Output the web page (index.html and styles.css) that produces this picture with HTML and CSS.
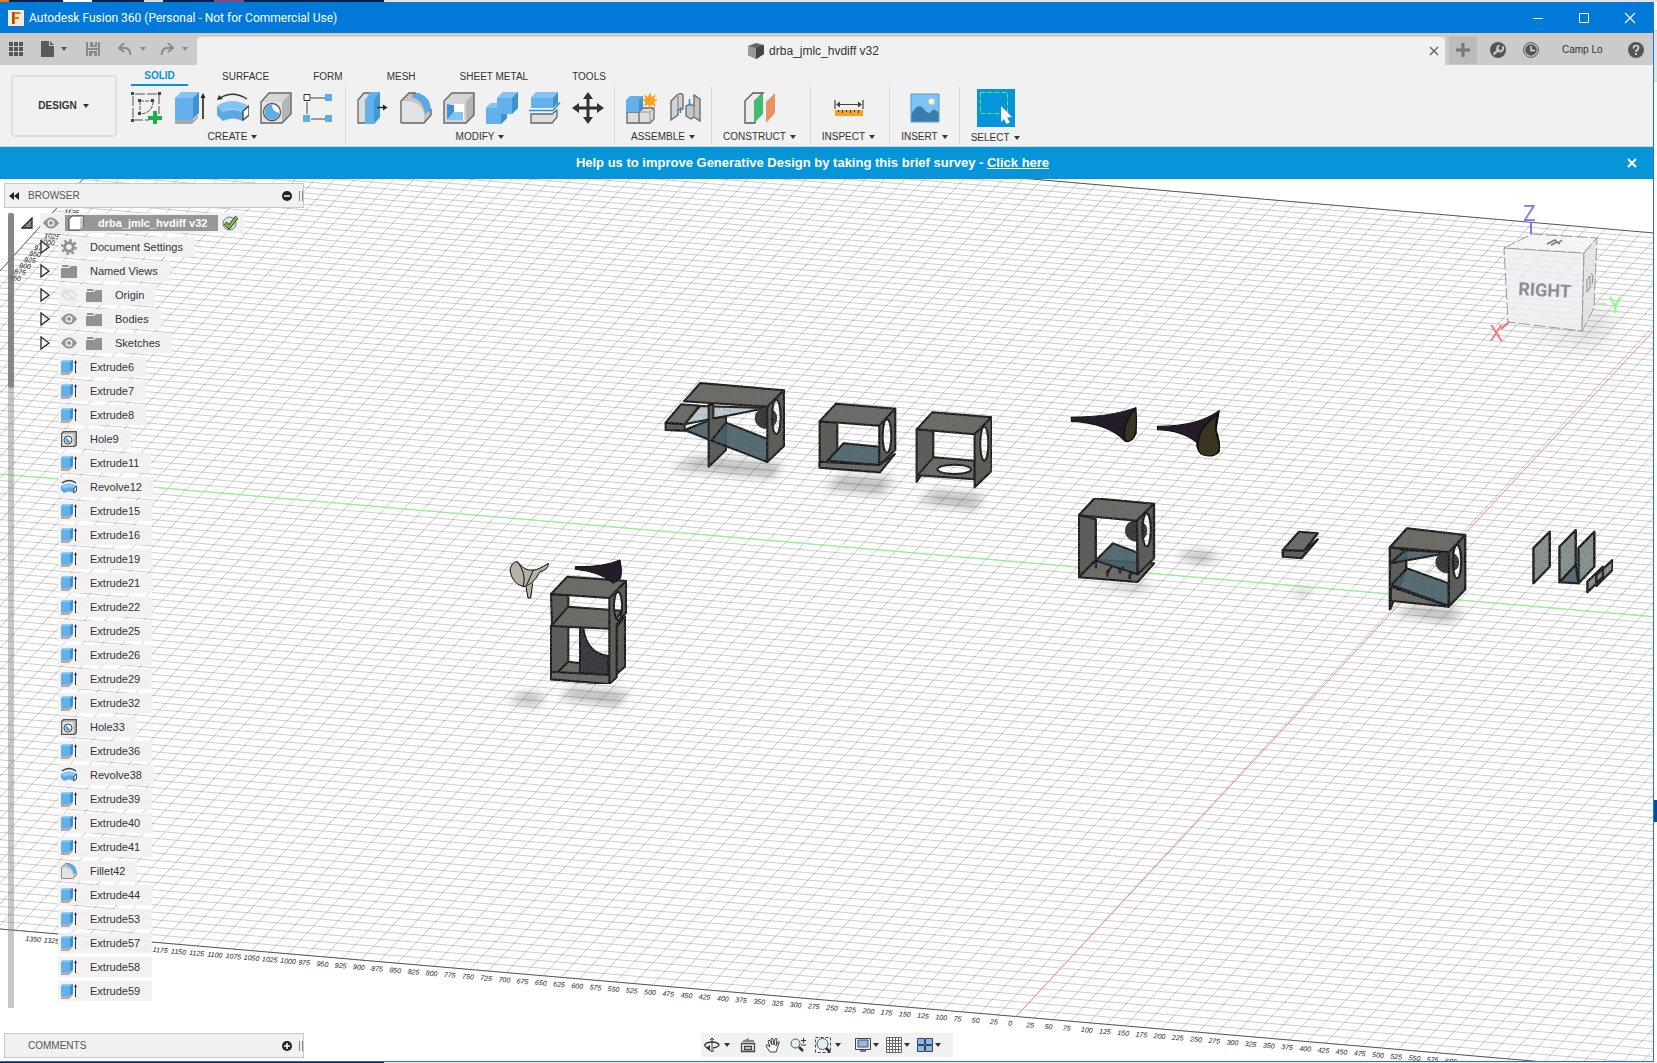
FILE: index.html
```html
<!DOCTYPE html>
<html lang="en">
<head>
<meta charset="utf-8">
<title>Autodesk Fusion 360 (Personal - Not for Commercial Use)</title>
<link rel="stylesheet" href="styles.css">
</head>
<body>
<svg class="defs" aria-hidden="true">
  <defs>
    <filter id="soft" x="-30%" y="-60%" width="160%" height="220%"><feGaussianBlur stdDeviation="14"/></filter>
    <filter id="grain" x="0" y="0" width="100%" height="100%">
      <feTurbulence type="fractalNoise" baseFrequency="0.3" numOctaves="2" result="n"/>
      <feColorMatrix in="n" type="matrix" values="0 0 0 0 0.1  0 0 0 0 0.1  0 0 0 0 0.1  1.2 0 0 0 -0.4" result="m"/>
      <feComposite in="m" in2="SourceAlpha" operator="in" result="g"/>
      <feMerge><feMergeNode in="SourceGraphic"/><feMergeNode in="g"/></feMerge>
    </filter>
  </defs>
  <symbol id="i-sketch" viewBox="0 0 32 32"><path d="M2 4v24h16M4 2h24v20" fill="none" stroke="#555" stroke-dasharray="10 2"/><path d="M9 9v13M9 9h13M22 9q0 12-13 13" fill="none" stroke="#555" stroke-dasharray="4 1"/><path d="M0 0h3v3H0zM27 0h3v3h-3zM0 27h3v3H0zM7 7h3v3H7zM20 7h3v3h-3zM7 20h3v3H7z" fill="#444"/><path d="M22 19h4v5h5v4h-5v5h-4v-5h-5v-4h5z" fill="#1fae4b"/></symbol>
  <symbol id="i-extrude" viewBox="0 0 32 32"><path d="M1 28h18l5-5v3l-6 6H1z" fill="#a9a9a9"/><path d="M1 6v22h18V6z" fill="#64b0ea"/><path d="M1 6l6-6h18l-6 6z" fill="#82c5f4"/><path d="M19 6l6-6v21l-6 6z" fill="#3f92d2"/><path d="M29 27V4" stroke="#222" stroke-width="1.6"/><path d="M26.500 6L29 1l2.500 5z" fill="#222"/></symbol>
  <symbol id="i-extrude-small" viewBox="0 0 16 16"><path d="M0 13h9l3-3v2l-4 4H0z" fill="#b4acac"/><path d="M0 3l2-2h10v9l-3 3H0z" fill="#64b0ea"/><path d="M0 3l2-2h10l-3 2z" fill="#86c8f6"/><path d="M9 3l3-2v9l-3 3z" fill="#3f92d2"/><path d="M14.500 2v12" stroke="#333"/><path d="M13 4l1.500-3L16 4z" fill="#333"/></symbol>
  <symbol id="i-revolve" viewBox="0 0 32 32"><path d="M3 6Q16-2 30 7" fill="none" stroke="#333" stroke-width="1.400"/><path d="M0 8l2-5 4 4z" fill="#333"/><path d="M0 14Q14 4 32 14l-6 6Q14 14 6 20z" fill="#82c5f4"/><path d="M0 14l6 6Q14 15 26 20v9q-11-5-20 0l-6-6z" fill="#5aa9e4"/><path d="M26 19l6-5v9l-6 5z" fill="#fff" stroke="#444" stroke-width="1.400"/></symbol>
  <symbol id="i-revolve-small" viewBox="0 0 16 16"><path d="M1 4q7-5 14 0" fill="none" stroke="#333" stroke-width="1.500"/><path d="M0 7q8-5 16 0v5l-3 2q-5-3-10 0l-3-3z" fill="#5aa9e4"/><path d="M0 7q8-5 16 0l-3 2Q8 7 3 10z" fill="#86c8f6"/><path d="M13 9l2.500-2v5L13 14z" fill="#fff" stroke="#444"/></symbol>
  <symbol id="i-hole" viewBox="0 0 32 32"><path d="M1 10v21h21l9-9V1H9z" fill="#d6d6d6"/><path d="M1 10h21v21H1z" fill="#e3e3e3"/><path d="M22 10l9-9v21l-9 9z" fill="#b5b5b5"/><path d="M1 10v21h21l9-9V1H9z" fill="none" stroke="#666" stroke-width="1.400"/><circle cx="12" cy="20" r="8.500" fill="#fff" stroke="#555" stroke-width="1.300"/><path d="M12 12.500A7.500 7.500 0 1 0 19.500 21Q12 20 12 12.500" fill="#5fade8"/></symbol>
  <symbol id="i-hole-small" viewBox="0 0 16 16"><path d="M.700 2.500L2.500.700h12.800v13l-1.600 1.600H.700z" fill="#bbb" stroke="#555" stroke-width="1.300"/><path d="M1.500 3h11v11.500h-11z" fill="#e2e2e2"/><circle cx="7" cy="9" r="4" fill="#fff" stroke="#444"/><path d="M6 6a3 3 0 1 0 4 4q-3 0-4-4" fill="#4a9fe0"/></symbol>
  <symbol id="i-pattern" viewBox="0 0 32 32"><path d="M8 6h14M4 10v12M8 27h14" stroke="#444"/><path d="M1 2.500h6v6H1z" fill="#fff" stroke="#333"/><path d="M22 2h7v7h-7zM0 23h7v7H0zM22 23h7v7h-7z" fill="#5fade8"/></symbol>
  <symbol id="i-press" viewBox="0 0 32 32"><path d="M1 8l6-7h8l-6 7v23H1z" fill="#ddd" stroke="#666" stroke-width="1.300"/><path d="M8 8l6-8h9v25l-6 7H8z" fill="#64b0ea"/><path d="M17 8l6-8v25l-6 7z" fill="#4396d6"/><path d="M20 15.500h7" stroke="#222" stroke-width="1.400"/><path d="M26 12.500l4.500 3-4.500 3z" fill="#222"/></symbol>
  <symbol id="i-fillet" viewBox="0 0 32 32"><path d="M1 9l8-8h8q14 4 14 19v4l-7 7H1z" fill="#c4c4c4"/><path d="M1 9h6q15 1 17 14v8H1z" fill="#e3e3e3"/><path d="M13 1h6q12 5 12 17l-6 4Q24 9 12 5z" fill="#5aa9e4"/><path d="M1 31V9l8-8h7M1 31h23l7-8v-6" fill="none" stroke="#666" stroke-width="1.400"/></symbol>
  <symbol id="i-shell" viewBox="0 0 32 32"><path d="M1 9l8-8h22v22l-8 8H1z" fill="#d6d6d6"/><path d="M23 9l8-8v22l-8 8z" fill="#b5b5b5"/><path d="M1 9l8-8h22v22l-8 8H1z" fill="none" stroke="#666" stroke-width="1.400"/><path d="M4 12h17v16H4z" fill="#fff"/><path d="M4 12l7 1v7l-7 8z" fill="#3f92d2"/><path d="M4 28l7-8h9v8z" fill="#82c5f4"/></symbol>
  <symbol id="i-combine" viewBox="0 0 32 32"><path d="M0 16l5-5h6V6l6-6h15v16l-6 6h-5v4l-6 6H0z" fill="#64b0ea"/><path d="M11 6l6-6h15l-6 6zM0 16l5-5h6v5z" fill="#82c5f4"/><path d="M26 6l6-6v16l-6 6zM15 22h6v4l-6 6z" fill="#3f92d2"/></symbol>
  <symbol id="i-split" viewBox="0 0 32 32"><path d="M2 22h21l5-4v7l-5 6H2z" fill="#ddd" stroke="#666" stroke-width="1.300"/><path d="M2 6l5-6h22v11l-5 5H2z" fill="#64b0ea"/><path d="M2 6l5-6h22l-5 6z" fill="#82c5f4"/><path d="M24 6l5-6v11l-5 5z" fill="#3f92d2"/><path d="M0 18.500h24l7-8" fill="none" stroke="#2a8fe0" stroke-width="1.500"/></symbol>
  <symbol id="i-move" viewBox="0 0 32 32"><path d="M16 0l5 7h-3.500v7.500H25V11l7 5-7 5v-3.500h-7.500V25H21l-5 7-5-7h3.500v-7.500H7V21l-7-5 7-5v3.500h7.500V7H11z" fill="#333"/></symbol>
  <symbol id="i-component" viewBox="0 0 32 32"><path d="M1 20h12v11H1zM13 20l4-4h11v11l-4 4H13z" fill="#ddd" stroke="#666" stroke-width="1.300"/><path d="M13 20h11l4-4M24 20v11" fill="none" stroke="#999"/><path d="M0 8l4-4h13v11l-4 5H0z" fill="#64b0ea"/><path d="M13 8l4-4v11l-4 5z" fill="#3f92d2"/><path d="M24 0l1.500 5 4.500-2.500-2 4.500 4 1-4 2 2 4.500-4.500-2L24 17l-2-4.500-4.500 2 2-4.500-4.500-2 4.500-1-2-4.500L22 5z" fill="#f9a11b"/></symbol>
  <symbol id="i-joint" viewBox="0 0 32 32"><path d="M2 9l6-6q6-3 6 1v13l-5 1v5l-7 5z" fill="#d2d2d2" stroke="#666" stroke-width="1.300"/><path d="M31 7v22l-6-4-3 2-5-3V14l4-2 4 2V3z" fill="#c4c4c4" stroke="#666" stroke-width="1.300"/><path d="M11.500 15v6M20.500 7v7" stroke="#2a8fe0" stroke-width="1.500"/><path d="M9 4v14M25 13v12" stroke="#777"/></symbol>
  <symbol id="i-construct" viewBox="0 0 32 32"><path d="M1 9l8-8h10l-8 8v22H1z" fill="#ececec" stroke="#555" stroke-width="1.300"/><path d="M10 9l9-8v21l-9 9z" fill="#3fbd74"/><path d="M22 10l9-9v20l-9 10z" fill="#e8935f"/></symbol>
  <symbol id="i-measure" viewBox="0 0 32 32"><path d="M2 8v9M30 8v9M4 12.500h24" stroke="#444" stroke-width="1.200"/><path d="M3 12.500l4-3v6zM29 12.500l-4-3v6z" fill="#444"/><path d="M2 18h28v6H2z" fill="#f9a11b"/><path d="M5.500 18v2M9.500 18v3M13.500 18v2M17.500 18v3M21.500 18v2M25.500 18v3" stroke="#333"/></symbol>
  <symbol id="i-image" viewBox="0 0 32 32"><path d="M2 2h28v28H2z" fill="#7cc4f5" stroke="#5599cc"/><circle cx="22.500" cy="9.500" r="3" fill="#fff6c0"/><path d="M2.500 22q7-14 14-3 4 4 6 0 3-4 7 2v8.500h-27z" fill="#3a7cab"/></symbol>
  <symbol id="i-select" viewBox="0 0 38 38"><path d="M0 0h38v38H0z" fill="#0795d9"/><path d="M3.500 3.500h27v21h-27z" fill="none" stroke="#6ee06e" stroke-dasharray="5 2"/><path d="M24 17l11 11-5 .5 3 5-3.500 1.500-2.500-5-3 3z" fill="#fff"/></symbol>
  <symbol id="i-eye" viewBox="0 0 16 16"><path d="M0 8q8-11 16 0-8 11-16 0" fill="#929292"/><circle cx="8" cy="8" r="3.500" fill="#f1f1f1"/><circle cx="8" cy="8" r="2" fill="#929292"/></symbol>
  <symbol id="i-hidden" viewBox="0 0 16 16"><path d="M1 8q7-9 14 0-7 9-14 0M2 2l12 12" fill="none" stroke="#dedede" stroke-width="2"/></symbol>
  <symbol id="i-folder" viewBox="0 0 16 16"><path d="M0 5h8l2-2h6v12H0zM1 2h6l1 2H1z" fill="#929292"/></symbol>
  <symbol id="i-gear" viewBox="0 0 16 16"><circle cx="8" cy="8" r="4.300" fill="none" stroke="#929292" stroke-width="3"/><circle cx="8" cy="8" r="6.800" fill="none" stroke="#929292" stroke-width="2.400" stroke-dasharray="2.670 2.670"/></symbol>
  <symbol id="i-expand" viewBox="0 0 10 14"><path d="M1 1v12l8-6z" fill="#f4f4f4" stroke="#333" stroke-width="1.400"/></symbol>
  <symbol id="i-down" viewBox="0 0 8 6"><path d="M1 1h6L4 5z" fill="currentColor"/></symbol>
</svg>

<div class="desktop-top"></div>
<div class="desktop">
<main class="window">
  <header class="titlebar">
    <svg class="logo" viewBox="0 0 16 16"><path d="M0 0h16v16H0z" fill="#fbe9dc"/><path d="M4 2h8l1 2H7v3h4v2H7v5H4z" fill="#e0761c"/><path d="M4 2h2v12H4z" fill="#a44f10"/></svg>
    <h1>Autodesk Fusion 360 (Personal - Not for Commercial Use)</h1>
    <button aria-label="Minimize"><svg viewBox="0 0 12 12"><path d="M1 6.500h10" stroke="#fff"/></svg></button>
    <button aria-label="Maximize"><svg viewBox="0 0 12 12"><path d="M1.500 1.500h9v9h-9z" stroke="#fff" fill="none"/></svg></button>
    <button aria-label="Close"><svg viewBox="0 0 12 12"><path d="M1 1l10 10M11 1L1 11" stroke="#fff" stroke-width="1.300"/></svg></button>
  </header>

  <div class="appbar">
    <div class="quick">
      <button aria-label="Data panel"><svg width="14" height="14" viewBox="0 0 14 14"><path d="M0 0h4v4H0zM5 0h4v4H5zM10 0h4v4h-4zM0 5h4v4H0zM5 5h4v4H5zM10 5h4v4h-4zM0 10h4v4H0zM5 10h4v4H5zM10 10h4v4h-4z" fill="#555"/></svg></button>
      <button aria-label="File"><svg width="14" height="16" viewBox="0 0 14 16"><path d="M0 0h8v5h5v11H0zM9 0l4 4H9z" fill="#5a5a5a"/></svg><svg class="caret"><use href="#i-down"/></svg></button>
      <button aria-label="Save"><svg width="14" height="14" viewBox="0 0 14 14"><path d="M0 0h2v6h10V0h2v14h-2V8H2v6H0zM4 0h3v3h2V0h2v5H4zM3 9h8v5H8v-3H6v3H3z" fill="#8a8a8a"/></svg></button>
      <button aria-label="Undo" class="off"><svg width="14" height="12" viewBox="0 0 14 12"><path d="M6 0L1 5l5 4M1 5h6q5 0 5.500 7" fill="none" stroke="currentColor" stroke-width="2"/></svg><svg class="caret"><use href="#i-down"/></svg></button>
      <button aria-label="Redo" class="off"><svg width="14" height="12" viewBox="0 0 14 12"><path d="M8 0l5 5-5 4M13 5H7q-5 0-5.500 7" fill="none" stroke="currentColor" stroke-width="2"/></svg><svg class="caret"><use href="#i-down"/></svg></button>
    </div>
    <div class="doctab">
      <svg class="doccube" viewBox="0 0 16 16"><path d="M0 3l8-3 8 2v9l-8 5-8-4z" fill="#666"/><path d="M0 3l8 2v11l-8-4z" fill="#999"/><path d="M8 5l8-3v9l-8 5z" fill="#444"/></svg>
      <span>drba_jmlc_hvdiff v32</span>
      <button aria-label="Close document"><svg width="10" height="10" viewBox="0 0 10 10"><path d="M1 1l8 8M9 1L1 9" stroke="#666" stroke-width="1.500"/></svg></button>
    </div>
    <div class="account">
      <button class="plus" aria-label="New tab"><svg width="14" height="14" viewBox="0 0 14 14"><path d="M7 0v14M0 7h14" stroke="#777" stroke-width="3"/></svg></button>
      <button aria-label="Extensions"><svg width="16" height="16" viewBox="0 0 16 16"><circle cx="8" cy="8" r="8" fill="#555"/><path d="M3.500 12.500L9 7" stroke="#ccc" stroke-width="2.400"/><path d="M12.500 4.500A3 3 0 1 1 9.500 3.500" fill="none" stroke="#ccc" stroke-width="2"/></svg></button>
      <button aria-label="Job status"><svg width="16" height="16" viewBox="0 0 16 16"><circle cx="8" cy="8" r="7.400" fill="none" stroke="#555"/><circle cx="8" cy="8" r="5.800" fill="#555"/><path d="M8 4v4.500h4" fill="none" stroke="#ddd" stroke-width="1.400"/></svg></button>
      <button class="user">Camp Lo</button>
      <button aria-label="Help"><svg width="16" height="16" viewBox="0 0 16 16"><circle cx="8" cy="8" r="8" fill="#555"/><path d="M5.500 6.500q0-3 2.500-3t2.500 2.300Q10.500 7.500 8 9v1M8 11v2" fill="none" stroke="#ddd" stroke-width="1.700"/></svg></button>
    </div>
  </div>

  <section class="ribbon">
    <button class="design">DESIGN <svg class="caret"><use href="#i-down"/></svg></button>
    <div class="tools">
      <nav class="tabs">
        <button class="on">SOLID</button><button>SURFACE</button><button>FORM</button><button>MESH</button><button>SHEET METAL</button><button>TOOLS</button>
      </nav>
      <div class="groups">
        <div class="group">
          <div class="icons"><button aria-label="Sketch"><svg><use href="#i-sketch"/></svg></button><button aria-label="Extrude"><svg><use href="#i-extrude"/></svg></button><button aria-label="Revolve"><svg><use href="#i-revolve"/></svg></button><button aria-label="Hole"><svg><use href="#i-hole"/></svg></button><button aria-label="Pattern"><svg><use href="#i-pattern"/></svg></button></div>
          <button class="label">CREATE <svg class="caret"><use href="#i-down"/></svg></button>
        </div>
        <div class="group">
          <div class="icons"><button aria-label="Press pull"><svg><use href="#i-press"/></svg></button><button aria-label="Fillet"><svg><use href="#i-fillet"/></svg></button><button aria-label="Shell"><svg><use href="#i-shell"/></svg></button><button aria-label="Combine"><svg><use href="#i-combine"/></svg></button><button aria-label="Split body"><svg><use href="#i-split"/></svg></button><button aria-label="Move"><svg><use href="#i-move"/></svg></button></div>
          <button class="label">MODIFY <svg class="caret"><use href="#i-down"/></svg></button>
        </div>
        <div class="group">
          <div class="icons"><button aria-label="New component"><svg><use href="#i-component"/></svg></button><button aria-label="Joint"><svg><use href="#i-joint"/></svg></button></div>
          <button class="label">ASSEMBLE <svg class="caret"><use href="#i-down"/></svg></button>
        </div>
        <div class="group wide">
          <div class="icons"><button aria-label="Offset plane"><svg><use href="#i-construct"/></svg></button></div>
          <button class="label">CONSTRUCT <svg class="caret"><use href="#i-down"/></svg></button>
        </div>
        <div class="group wide">
          <div class="icons"><button aria-label="Measure"><svg><use href="#i-measure"/></svg></button></div>
          <button class="label">INSPECT <svg class="caret"><use href="#i-down"/></svg></button>
        </div>
        <div class="group">
          <div class="icons"><button aria-label="Insert image"><svg><use href="#i-image"/></svg></button></div>
          <button class="label">INSERT <svg class="caret"><use href="#i-down"/></svg></button>
        </div>
        <div class="group">
          <div class="icons"><button aria-label="Select" class="big"><svg><use href="#i-select"/></svg></button></div>
          <button class="label">SELECT <svg class="caret"><use href="#i-down"/></svg></button>
        </div>
      </div>
    </div>
  </section>

  <aside class="banner">
    <p>Help us to improve Generative Design by taking this brief survey - <a href="#survey">Click here</a></p>
    <button aria-label="Dismiss"><svg width="10" height="10" viewBox="0 0 10 10"><path d="M1 1l8 8M9 1L1 9" stroke="#fff" stroke-width="2.200"/></svg></button>
  </aside>

  <section class="viewport">
    <svg class="scene" viewBox="0 179 1653 882" preserveAspectRatio="xMinYMin slice" role="img" aria-label="Model canvas">
      <clipPath id="plane"><path d="M-10 282L83 179L100 160H815L1660 233.500V1072L0 929H-10z"/></clipPath>
      <g clip-path="url(#plane)"><path id="rows" class="grid"/><path id="cols" class="grid"/></g>
      <path class="edge" d="M0 929L1660 1072M0 271L83 179M1020 178L1660 233.500"/>
      <g id="ticks" class="ticks"></g>
      <path class="axis-y" d="M0 474L1660 617.500"/>
      <path class="axis-x" d="M1016 1016.500L1660 324"/>

      <g transform="translate(490 370) scale(.3333)">
        <g class="shadow" filter="url(#soft)"><path d="M540 295l80-35 260 20-30 45zM1000 355l50-40 165 10-40 50zM1280 395l55-35 150 15-30 45zM205 985l45-35 170 15-40 45zM50 995l50-30 70 10-30 35z"/></g>
        <g class="solid" filter="url(#grain)">
          <path class="side" d="M527 158L584 163L584 182L527 180z"/>
          <path d="M527 158L573 103L628 107L584 163z"/>
          <path class="glass" d="M584 180L660 150V210z"/>
          <path class="glass pale" d="M584 163L630 108L830 114z"/>
          <path class="side" d="M656 104V290L708 240V140L670 145V104z"/>
          <path class="glass" d="M664 212L708 158L832 207V276z"/>
          <ellipse class="ball" cx="828" cy="144" rx="33" ry="32"/>
          <path d="M582 94L631 39L882 61L832 110z"/>
          <path class="side" fill-rule="evenodd" d="M832 110L882 61V228L832 276zM858 90a13 51 0 1 0 2 0z"/>

          <path class="side" d="M989 154L1042 158V240L1010 275L989 292z"/>
          <path class="glass" d="M1015 272L1060 220L1168 230V285z"/>
          <path d="M989 275L1168 285L1215 252L1170 307L989 293z"/>
          <path d="M989 154L1038 101L1216 116L1168 167z"/>
          <path class="side" fill-rule="evenodd" d="M1168 167L1216 116V240L1168 285zM1190 148a13 50 0 1 0 2 0z"/>

          <path class="side" d="M1280 178L1330 182V262L1280 336z"/>
          <path fill-rule="evenodd" d="M1283 316L1330 262L1454 272V328zM1392 284a51 14 0 1 0 2 0z"/>
          <path d="M1280 178L1327 127L1505 142L1454 193z"/>
          <path class="side" fill-rule="evenodd" d="M1454 193L1505 142V303L1454 352zM1482 170a12 51 0 1 0 2 0z"/>

          <path class="side" d="M380 770L405 740V890L380 912z"/>
          <path class="side" d="M183 672L235 676V715L186 768zM183 768H235V875L183 928z"/>
          <path d="M183 768L235 710L395 722L360 776z"/>
          <path d="M183 928L235 875L358 890V942z"/>
          <path class="dark" d="M270 775H280Q290 850 355 858V915L270 908z"/>
          <path d="M183 672L232 620L408 633L358 684z"/>
          <path class="side" fill-rule="evenodd" d="M358 684L408 633V728L380 765V922L358 942zM383 666a12 42 0 1 0 2 0z"/>
          <path d="M183 905L358 915V942L183 928z"/>
        </g>
        <g class="horn">
          <path class="bone" d="M60 600Q65 575 82 575Q105 605 130 600Q145 600 175 580Q175 600 150 605Q125 650 100 650Q65 640 60 600z"/><path class="bone" d="M82 575Q110 610 100 650M130 600L108 650M108 650L114 684H122L128 640"/>
          <path d="M256 590Q340 592 390 570Q398 600 392 625L370 640Q330 605 256 598z"/>
        </g>
      </g>

      <g transform="matrix(.388 0 0 .3333 1050 390)">
        <g class="shadow" filter="url(#soft)"><path d="M90 590l160-10 20 0-40 25zM320 495l70-15 50 20-50 25zM880 670l60-25 130 15-40 40zM630 610l30-25 10 10-20 30z"/></g>
        <g class="horn">
          <path d="M55 82Q160 80 221 53L222 130Q210 160 194 154Q150 100 55 94z"/><path class="olive" d="M221 56Q226 120 216 142Q206 158 194 152Q184 100 221 56z"/>
          <path d="M277 109Q380 110 436 62L428 120Q440 160 436 185Q420 205 390 190Q375 175 379 158Q340 120 277 119z"/><path class="olive" d="M432 75Q420 110 436 160Q440 200 408 198Q375 195 382 155Q385 110 432 75z"/>
        </g>
        <g class="solid" filter="url(#grain)">
          <path class="side" d="M74 376L118 388V520L74 560z"/>
          <path d="M74 562L118 510L268 520L226 576z"/>
          <ellipse class="ball" cx="222" cy="422" rx="28" ry="32"/>
          <path class="glass" d="M118 512L162 460L226 488V553z"/>
          <path class="dark" d="M118 512V535M148 560V545L160 530M180 550V540L190 530M205 568V555L216 545"/>
          <path d="M74 376L115 325L268 341L224 392z"/>
          <path class="side" fill-rule="evenodd" d="M224 392L268 341V505L226 553zM248 370a11 50 0 1 0 2 0z"/>

          <path class="side" d="M600 480L655 482L690 448L648 505L600 500z"/><path d="M600 480L642 425L690 430L655 482z"/>

          <path class="side" d="M876 472L918 480V540L876 660z"/>
          <path class="glass" d="M878 520L915 480L1028 488z"/>
          <ellipse class="ball" cx="1024" cy="517" rx="30" ry="32"/>
          <path class="glass" d="M880 585L920 535L1028 580V648z"/>
          <path d="M878 590L1028 650L878 632z"/>
          <path d="M876 472L920 415L1070 435L1028 487z"/>
          <path class="side" fill-rule="evenodd" d="M1028 487L1070 435V598L1028 650zM1048 465a11 50 0 1 0 2 0z"/>

          <path class="pane" d="M1246 474L1288 425V530L1246 580zM1313 470L1355 420V525L1313 577z"/>
          <path class="glass" d="M1313 577L1355 525L1362 580z"/>
          <path class="pane" d="M1362 474L1403 425V530L1362 580zM1385 575L1425 530V560L1385 607zM1408 555L1450 510V540L1408 588z"/>
        </g>
      </g>

      <g class="viewcube">
        <path class="cube-shadow" d="M1508 322l74 12 20-25 4 18-24 14z" filter="url(#soft)"/>
        <path class="cube-face" d="M1504 248L1584 253L1582 331L1508 322z"/>
        <path class="cube-top" d="M1504 248L1532 234L1597 238L1584 253z"/>
        <path class="cube-side" d="M1584 253L1597 238L1594 308L1582 331z"/>
        <path d="M1547 244l8-4 3 3 4-3M1551 245l6-3 3 2" fill="none" stroke="#777" stroke-width="1.500"/>
        <path d="M1587 280l3-4v12l-3 4zM1591 273l2 3-1 8" fill="none" stroke="#888"/>
        <path d="M1531 222v12" stroke="#7a76f5" stroke-width="2"/><path d="M1501 329l8-7" stroke="#f66" stroke-width="2"/><path d="M1595 304h11" stroke="#8f8" stroke-width="1.500"/>
        <text x="1518" y="295" class="cube-label" transform="rotate(3 1518 295)">RIGHT</text>
        <text x="1523" y="221" class="ax z">Z</text><text x="1490" y="341" class="ax x">X</text><text x="1609" y="313" class="ax y">Y</text>
      </g>
    </svg>

    <div class="overlay">
      <div class="panel"><svg width="10" height="8" viewBox="0 0 10 8"><path d="M5 0v8L0 4zM10 0v8L5 4z" fill="#222"/></svg><h2>BROWSER</h2><button aria-label="Collapse all"><svg width="10" height="10" viewBox="0 0 10 10"><circle cx="5" cy="5" r="5" fill="#222"/><path d="M2 5h6" stroke="#fff" stroke-width="1.500"/></svg></button><i class="grip"></i></div>
      <div class="browser">
        <div class="scrollbar"><i></i></div>
        <ul class="tree" id="tree">
          <li class="root"><svg class="open" viewBox="0 0 12 12"><path d="M11 1v10H1z" fill="#888" stroke="#222" stroke-width="1.300"/></svg><span class="node"><svg class="ic"><use href="#i-eye"/></svg><span class="picked"><svg class="ic" viewBox="0 0 16 16"><path d="M1 4l3-3h11v11l-3 3H1z" fill="#fff" stroke="#444"/><path d="M12 4l3-3v11l-3 3z" fill="#ccc"/></svg><b>drba_jmlc_hvdiff v32</b></span><svg class="ic" viewBox="0 0 16 16"><circle cx="7.500" cy="8.500" r="6.500" fill="#dfe3ea" stroke="#777"/><path d="M3 8l4 4 8-10" fill="none" stroke="#333" stroke-width="4"/><path d="M3 8l4 4 8-10" fill="none" stroke="#7cc04b" stroke-width="2.400"/></svg></span></li>
          <li><svg class="ex"><use href="#i-expand"/></svg><span class="node"><svg class="ic"><use href="#i-gear"/></svg>Document Settings</span></li>
          <li><svg class="ex"><use href="#i-expand"/></svg><span class="node"><svg class="ic"><use href="#i-folder"/></svg>Named Views</span></li>
          <li><svg class="ex"><use href="#i-expand"/></svg><span class="node sub"><svg class="ic"><use href="#i-hidden"/></svg><svg class="ic"><use href="#i-folder"/></svg>Origin</span></li>
          <li><svg class="ex"><use href="#i-expand"/></svg><span class="node sub"><svg class="ic"><use href="#i-eye"/></svg><svg class="ic"><use href="#i-folder"/></svg>Bodies</span></li>
          <li><svg class="ex"><use href="#i-expand"/></svg><span class="node sub"><svg class="ic"><use href="#i-eye"/></svg><svg class="ic"><use href="#i-folder"/></svg>Sketches</span></li>
        </ul>
      </div>
      <div class="bottom">
        <div class="panel comments"><h2>COMMENTS</h2><button aria-label="Add comment"><svg width="10" height="10" viewBox="0 0 10 10"><circle cx="5" cy="5" r="5" fill="#222"/><path d="M2 5h6M5 2v6" stroke="#fff" stroke-width="1.500"/></svg></button><i class="grip"></i></div>
        <div class="navbar">
          <button aria-label="Orbit"><svg viewBox="0 0 16 16"><path d="M8 1v14M6 3l2-2 2 2M6 13l2 2 2-2" fill="none" stroke="#444"/><path d="M5 11Q0 10 1 7.500 3 5 8 5t7 2.500Q15 10 9 11" fill="none" stroke="#333" stroke-width="1.300"/><path d="M6 8v6l-4-3z" fill="#333"/></svg><svg class="caret"><use href="#i-down"/></svg></button>
          <button aria-label="Look at"><svg viewBox="0 0 16 16"><path d="M1.500 6.500h13v8h-13zM4.500 9.500h7v3h-7z" fill="#eee" stroke="#444" stroke-width="1.300"/><path d="M2 4l7-3v2h5v2H3z" fill="#888"/></svg></button>
          <button aria-label="Pan"><svg viewBox="0 0 16 16"><path d="M5 15L1 9q0-2 2-1l2 2-2-6q1-2 2 0l2 4-1-6q1-2 2 0l1 6 1-6q1-1 2 0l-1 7 2-4q2-1 1 1l-3 9z" fill="#fff" stroke="#444"/></svg></button>
          <button aria-label="Zoom"><svg viewBox="0 0 16 16"><circle cx="5.500" cy="6.500" r="4.500" fill="#dff0f2" stroke="#555"/><path d="M9 10l4 4" stroke="#333" stroke-width="2.500"/><path d="M11 3.500h5M13.500 1v5M11 8h5" stroke="#333"/></svg></button>
          <button aria-label="Fit"><svg viewBox="0 0 16 16"><path d="M.500.500h15v15H.500z" fill="none" stroke="#444" stroke-dasharray="3 2"/><circle cx="7.500" cy="7" r="5.500" fill="#dff0f2" stroke="#555"/><path d="M11 11l4 4" stroke="#333" stroke-width="2.500"/></svg><svg class="caret"><use href="#i-down"/></svg></button>
          <button aria-label="Display settings" class="snug first"><svg viewBox="0 0 16 16"><path d="M.500 1.500h15v11H.500z" fill="#eee" stroke="#444"/><path d="M3 3h10v7H3z" fill="#8fb8e8" stroke="#456"/><path d="M5 13h6v2H5z" fill="#777"/></svg><svg class="caret"><use href="#i-down"/></svg></button>
          <button aria-label="Grid settings" class="snug"><svg viewBox="0 0 16 16"><path d="M.500.500h15v15H.500zM3.500 0v16M6.500 0v16M9.500 0v16M12.500 0v16M0 3.500h16M0 6.500h16M0 9.500h16M0 12.500h16" fill="#fff" stroke="#666"/></svg><svg class="caret"><use href="#i-down"/></svg></button>
          <button aria-label="Viewports" class="snug"><svg viewBox="0 0 16 16"><path d="M.500 1.500h7v6h-7zM8.500 1.500h7v6h-7zM.500 8.500h7v6h-7zM8.500 8.500h7v6h-7z" fill="#8fb8e8" stroke="#346"/></svg><svg class="caret"><use href="#i-down"/></svg></button>
        </div>
      </div>
    </div>
  </section>
</main>
<div class="desktop-side"></div>
</div>
<div class="desktop-bottom"></div>
<script src="scene.js"></script>
</body>
</html>
```
FILE: styles.css
```css
* { box-sizing: border-box; }
body { margin: 0; height: 100vh; display: flex; flex-direction: column; overflow: hidden; font: 11px/16px "Liberation Sans", Arial, sans-serif; color: #333; background: #fff; }
button { border: 0; padding: 0; margin: 0; background: none; font: inherit; color: inherit; display: flex; align-items: center; justify-content: center; }
h1, h2, p, ul { margin: 0; padding: 0; list-style: none; }
svg { flex: none; }
.defs { position: absolute; width: 0; height: 0; }
.caret { width: 8px; height: 6px; }

.desktop-top { height: 2px; background: linear-gradient(90deg, #e87a1c 9px, #0b1f4a 9px, #0b1f4a 63px, #fff 63px, #fff 92px, #0b1f4a 92px, #0b1f4a 144px, #ddd 144px, #ddd 163px, #0b1f4a 163px, #0b1f4a 214px, #8a4a7a 214px, #8a4a7a 244px, #0b1f4a 244px, #0b1f4a 384px, #e4e4e4 384px); }
.desktop { flex: 1; min-height: 0; display: flex; }
.desktop-side { width: 3px; background: linear-gradient(#fff 28px, #aaa 28px, #e4e4e4 29px, #e4e4e4 79px, #aaa 79px, #fff 80px, #fff 798px, #0a4a9a 798px, #0a4a9a 820px, #fff 820px); }
.desktop-bottom { height: 1px; background: linear-gradient(90deg, #0b1f4a 384px, #eee 384px); }
.window { flex: 1; min-width: 0; display: flex; flex-direction: column; border: solid #1976d2; border-width: 0 1px 1px 0; }

.titlebar { height: 31px; background: #0079d8; color: #fff; display: flex; align-items: center; padding-left: 8px; }
.logo { width: 16px; height: 16px; margin-right: 5px; }
.titlebar h1 { flex: 1; font: 12px/16px Roboto, "Noto Sans", sans-serif; }
.titlebar button { width: 46px; height: 31px; }
.titlebar button svg { width: 12px; height: 12px; }

.appbar { height: 32px; display: flex; background: #cbcbcb; border-top: 4px solid #cdc9c5; }
.quick { width: 197px; padding: 0 0 4px 9px; display: flex; align-items: center; gap: 18px; color: #555; }
.quick button { gap: 5px; height: 24px; }
.quick .off { color: #8a8a8a; gap: 7px; margin-right: -5px; }
.doctab { flex: 1; display: flex; align-items: center; justify-content: center; gap: 5px; background: #f1f1f1; border-radius: 4px 4px 0 0; font-size: 12px; padding-left: 12px; }
.doctab span { margin-right: auto; }
.doccube { width: 16px; height: 16px; margin-left: auto; }
.doctab button { width: 22px; height: 28px; }
.account { width: 208px; display: flex; align-items: center; padding: 0 0 2px 4px; font-size: 10px; gap: 17px; }
.plus { width: 28px; height: 28px; background: #bcbcbc; margin-right: -4px; }
.user { margin: 0 8px 0 6px; }

.ribbon { height: 82px; display: flex; background: #f1f1f1; border-bottom: 1px solid #d6d6d6; padding-left: 11px; font-size: 10px; line-height: 12px; }
.design { width: 106px; height: 62px; margin-top: 10px; border: 2px solid #dedede; border-radius: 4px; font-weight: bold; gap: 5px; }
.label { gap: 3px; height: 14px; }
.tools { padding: 3px 0 0 3px; }
.tabs { display: flex; height: 19px; }
.tabs button { height: 18px; padding: 0 22px; }
.tabs .on { color: #0795d9; font-weight: bold; width: 57px; margin: 0 12px 0 11px; padding: 0; border-bottom: 2px solid #0795d9; }
.groups { display: flex; }
.group { padding: 2px 10px 0 11px; display: flex; flex-direction: column; align-items: center; border-right: 1px solid #d8d8d8; height: 57px; }
.group.wide { padding-right: 13px; }
.group:last-child { border: 0; }
.icons { display: flex; align-items: center; gap: 11px; height: 38px; }
.icons svg { width: 32px; height: 32px; display: block; }
.icons .big svg { width: 38px; height: 38px; }
.groups .label { margin-top: 4px; }

.banner { height: 32px; background: #0795d9; color: #fff; display: grid; grid-template-columns: 1fr auto 1fr 28px; align-items: center; font-size: 13px; font-weight: bold; }
.banner p { grid-column: 2; }
.banner a { color: inherit; font-weight: bold; }
.banner button { grid-column: 4; justify-self: end; width: 42px; height: 32px; }

.viewport { flex: 1; min-height: 0; position: relative; background: #fff; }
.scene { position: absolute; inset: 0; width: 100%; height: 100%; }
.overlay { position: absolute; inset: 0; display: flex; flex-direction: column; padding: 4px 0 3px; }
.panel { width: 300px; height: 25px; background: #f1f1f1; border: 1px solid #c8c8c8; display: flex; align-items: center; padding-left: 4px; margin-left: 4px; flex: none; }
.panel h2 { flex: 1; font-size: 10px; font-weight: normal; margin-left: 9px; color: #555; }
.comments h2 { margin-left: 19px; }
.grip { width: 4px; height: 10px; border: solid #888; border-width: 0 1px; margin-left: 7px; }
.browser { flex: 1; min-height: 0; display: flex; padding: 3px 0 0 8px; overflow: hidden; }
.scrollbar { width: 6px; margin: 2px 0 25px; background: rgba(130, 130, 135, .45); }
.scrollbar i { display: block; height: 22%; border-radius: 3px; background: rgba(110, 110, 110, .7); }
.tree { padding-left: 7px; }
.tree li { height: 24px; display: flex; align-items: center; padding-left: 19px; }
.tree .root { padding-left: 0; }
.open { width: 12px; height: 12px; margin-right: 7px; }
.ex { width: 10px; height: 14px; margin-right: 8px; }
.ic { width: 16px; height: 16px; margin-right: 13px; }
.node { display: flex; align-items: center; height: 20px; padding: 0 12px 0 3px; background: rgba(241, 241, 241, .93); }
.sub .ic:first-child { margin-right: 9px; }
.tree .leaf { padding-left: 37px; }
.picked { display: flex; align-items: center; height: 16px; background: #979797; color: #fff; padding: 0 11px 0 3px; margin-right: 4px; }
.root .node { padding-right: 6px; }
.root .ic { margin-right: 0; }
.root .node > .ic:first-child { margin-right: 6px; }
.picked b { margin-left: 14px; }
.bottom { display: grid; grid-template-columns: 1fr auto 1fr; flex: none; }
.navbar { background: #f1f1f1; height: 24px; display: flex; align-items: center; gap: 9px; padding: 0 14px 0 3px; color: #333; }
.navbar button { gap: 3px; }
.navbar button svg { width: 16px; height: 16px; }
.navbar button .caret { width: 8px; height: 6px; }
.navbar .snug { gap: 1px; margin-right: -3px; }
.navbar .first { margin-left: 4px; }

.grid { fill: none; stroke: #000; stroke-opacity: .2; stroke-width: 1; }
.edge { fill: none; stroke: #555; }
.ticks { font: italic 7px "Liberation Sans", sans-serif; fill: #222; }
.axis-y { stroke: #7dff7d; }
.axis-x { stroke: #ff8a8a; }
.shadow { fill: #000; fill-opacity: .25; }
.solid path, .solid ellipse { fill: #716f6a; stroke: #0c0c0c; stroke-width: 6; stroke-linejoin: round; }
.solid .side { fill: #5f5e5a; }
.solid .dark { fill: #30363a; }
.solid .glass { fill: #45626c; fill-opacity: .9; }
.solid .pale { fill: #c4d4dc; }
.solid .ball { fill: #333537; stroke-width: 1; }
.solid .pane { fill: #7d8a8b; fill-opacity: .85; }
.horn path { fill: #241c28; stroke: #0c0c0c; stroke-width: 3; }
.horn .olive { fill: #3a3520; }
.horn .bone { fill: #b5b1a4; }
.cube-face { fill: #eeeff1; fill-opacity: .85; stroke: #999; stroke-dasharray: 12 3; }
.cube-top { fill: #f4f4f4; fill-opacity: .85; stroke: #999; stroke-dasharray: 12 3; }
.cube-side { fill: #e2e2e4; fill-opacity: .85; stroke: #999; stroke-dasharray: 12 3; }
.cube-shadow { fill: #000; fill-opacity: .4; }
.cube-label { font: bold 18px Roboto, sans-serif; fill: #8a8f99; }
.ax { font: 22px "Open Sans", sans-serif; }
.z { fill: #7a76f5; }
.x { fill: #ff6b6b; }
.y { fill: #7dff7d; }
```
FILE: scene.js
```js
// Work plane: origin where the two axes cross, rows parallel to Y, columns parallel to X.
const SLOPE = 0.0862;
const LEAN = 0.923;
let rows = '';
for (let i = -65; i <= 65; i++) {
  const y = 474 + 6.454 * i + 0.0084 * i * i;
  rows += `M-10 ${y - 10 * SLOPE}L1670 ${y + 1670 * SLOPE}`;
}
document.getElementById('rows').setAttribute('d', rows);

let cols = '';
for (let i = -110; i <= 80; i++) {
  const x = 1016 + 18.2 * i;
  const y = 929 + x * SLOPE;
  cols += `M${x} ${y}L${x + 900 * LEAN} ${y - 900}`;
}
document.getElementById('cols').setAttribute('d', cols);

// Distances printed along the two visible borders of the plane.
const ticks = document.getElementById('ticks');
function tick(x, y, value) {
  const t = document.createElementNS('http://www.w3.org/2000/svg', 'text');
  t.setAttribute('x', x);
  t.setAttribute('y', y);
  t.setAttribute('transform', `rotate(5 ${x} ${y})`);
  t.textContent = value;
  ticks.append(t);
}
for (let i = -54; i < 25; i++) {
  const x = 1016 + 18.2 * i;
  tick(x - 8, 938 + x * SLOPE, Math.abs(i) * 25);
}
for (let i = 0; i < 12; i++) {
  tick(64 - i * 5, 214 + i * 6, 1125 - i * 25);
}

// Timeline features listed below the document's folders.
const features = 'Extrude6 Extrude7 Extrude8 Hole9 Extrude11 Revolve12 Extrude15 Extrude16 Extrude19 Extrude21 Extrude22 Extrude25 Extrude26 Extrude29 Extrude32 Hole33 Extrude36 Revolve38 Extrude39 Extrude40 Extrude41 Fillet42 Extrude44 Extrude53 Extrude57 Extrude58 Extrude59'.split(' ');
const icons = { Extrude: 'i-extrude-small', Revolve: 'i-revolve-small', Hole: 'i-hole-small', Fillet: 'i-fillet' };
document.getElementById('tree').insertAdjacentHTML('beforeend', features.map(name =>
  `<li class="leaf"><span class="node"><svg class="ic"><use href="#${icons[name.replace(/\d+/, '')]}"/></svg>${name}</span></li>`).join(''));
```
